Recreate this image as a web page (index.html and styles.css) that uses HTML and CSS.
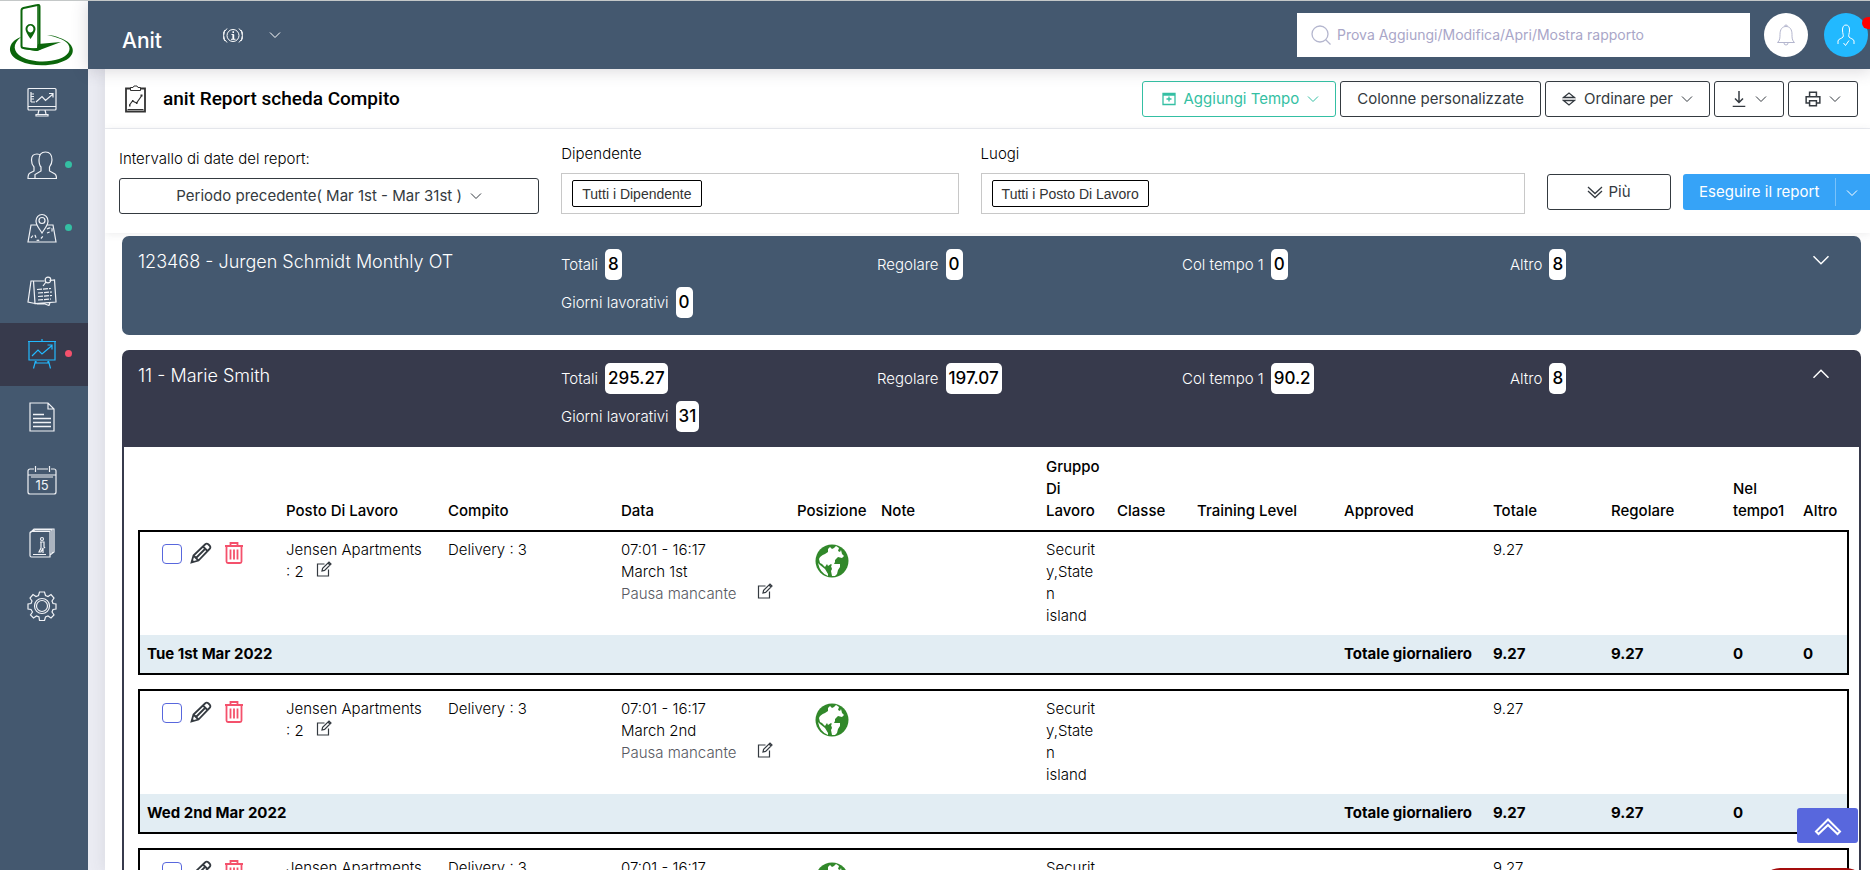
FILE: index.html
```
<!DOCTYPE html>
<html lang="it">

<head>
    <meta charset="UTF-8">
    <title>anit Report scheda Compito</title>

    <link rel="stylesheet" href="styles.css">
</head>

<body>
    <!-- shared icons -->
    <svg class="sprite" aria-hidden="true">
        <symbol id="down" viewBox="0 0 12 8">
            <path d="M1 1.500l5 5 5-5" />
        </symbol>
        <symbol id="up" viewBox="0 0 12 8">
            <path d="M1 6.500l5-5 5 5" />
        </symbol>
        <symbol id="pencil" viewBox="0 0 22 22">
            <path d="M1.500 20.500l2-7L15 2.500a2.500 2.500 0 0 1 3.500 0l1 1a2.500 2.500 0 0 1 0 3.500L8.500 18.500zM3.500 13.500l5 5M13 4.500l4.500 4.500M6 16L15.500 6.500M2 18.500l1.500 1.500" />
        </symbol>
        <symbol id="trash" viewBox="0 0 18 22">
            <path d="M0 4h18M5.500 4V1h7v3M1.500 4v15.500a1.500 1.500 0 0 0 1.500 1.500h12a1.500 1.500 0 0 0 1.500-1.500V4M5.500 7.500v10M9 7.500v10M12.500 7.500v10" />
        </symbol>
        <symbol id="note" viewBox="0 0 16 16">
            <path d="M8.500 3H1.500v12h11V8.500M6 10l.6-2.600L13 1l2 2-6.400 6.400zM12 2l2 2" />
        </symbol>
        <symbol id="globe" viewBox="0 0 34 34">
            <circle cx="17" cy="17" r="16.500" fill="#31882a" />
            <path fill="#fff" d="M4 15q1-3 6-5l3-2 0-3 2-2 2 2 2-1 2-2 3 2-1 3 2 1 1-2 1 4 2 2-2 2-4-1-3 3 0 2-2 4-2-2-3 2-1-2-2 3-3-3-2-1z" />
            <path fill="#fff" d="M16 22l2-2h7l0 3-2 3-1 4-2 2h-3l-1-5 1-2z" />
            <path fill="#fff" d="M3 19l2 2 5 4 3 5 0 2q-8-3-10-13z" />
        </symbol>
    </svg>

    <aside id="sidebar">
        <a href="#" class="logo" title="Anit">
            <svg viewBox="0 0 88 68">
                <path class="fill" d="M21 36C7 41 6 54 20 60c15 7 39 5 49-3 8-7 3-16-9-20-4-2-9-3-13-3 9 2 17 4 21 9 4 6 0 12-9 15-12 4-28 3-37-2-9-5-10-13-1-20z" />
                <path stroke-width="2" d="M21.500 9.500q0-2 2-2.500l14-3q2-.5 2 1.500V48l-3 1-13-2q-2 0-2-2z" />
                <path stroke-width="1.500" d="M38 5v43" />
                <path class="fill" d="M38 43l23-2-24 9-14-2 14-1z" />
                <path class="fill" fill-rule="evenodd" d="M30.500 38q-5-7-5-10a5 5 0 0 1 10 0q0 3-5 10zM30.500 31.500a3 3.500 0 1 0-.1 0z" />
            </svg>
        </a>
        <nav>
            <a href="#" title="Dashboard">
                <svg viewBox="0 0 30 30">
                    <path d="M2 1.500h26a1 1 0 0 1 1 1V22a1 1 0 0 1-1 1H2a1 1 0 0 1-1-1V2.500a1 1 0 0 1 1-1zM1 19.500h28M12 23l-1 4M18 23l1 4M9 27.500h12v1.500H9zM4 5v10M4 7h3M4 9.500h3M4 12h3M4 15h4M9 15l6-5.500 3.500 4L26 7M22 6.500h4v4" />
                </svg>
            </a>
            <a href="#" title="Dipendenti">
                <svg viewBox="0 0 30 30">
                    <path d="M8 28.500v-4l6-3.500v-4c-2-2-2-4-2-7 0-5 2-8 6.500-8s6.500 3 6.500 8c0 3-1 5-2.500 7v4l5.500 3c1.500 1 1.500 2.500 1.500 4.500zM8 28.500H1c0-3 0-4.500 2-5.500l4-2v-4c-2-2-2.500-4-2.500-7 0-4 2-6 5.500-6q2.500 0 3.500 1.500" />
                </svg>
                <span class="dot green"></span>
            </a>
            <a href="#" title="Luoghi">
                <svg viewBox="0 0 30 30">
                    <path d="M15 20c-3-5-6-7.500-6-12a6 6.500 0 0 1 12 0c0 4.500-3 7-6 12zM9.500 12H4L1 29h28l-3-17h-5.500" />
                    <circle cx="15" cy="7.500" r="3" />
                    <path stroke-dasharray="3 2" d="M4 25q4-6 5 0t8-3M20 16q6-3 5 2l-5 2" />
                </svg>
                <span class="dot green"></span>
            </a>
            <a href="#" title="Note">
                <svg viewBox="0 0 30 30">
                    <path d="M6.500 5h11M22.500 4.500l5-.5 1.500 22-21 1.500L6.500 5M6.500 5H4L1 26l7 1.500M10 28l8 0 4 1.500 1-3" />
                    <circle cx="21" cy="4" r="2.800" />
                    <path d="M19 6l-3 4" />
                    <path stroke-dasharray="5 1" d="M10 13.500l14-1M11 17l14-1M11 20.500l14-1M11 24l13-1" />
                </svg>
            </a>
            <a href="#" class="active" title="Report">
                <svg viewBox="0 0 30 30">
                    <path d="M1 2.500h28M2 2.500h26V21H2zM15 0v2M9 22v2h12v-2M8.500 22L6.500 29.500M21.500 22l2 7.500M5 17l6-6 4 4L25 6.500M20.500 6H25v4.500" />
                </svg>
                <span class="dot pink"></span>
            </a>
            <a href="#" title="Documenti">
                <svg viewBox="0 0 30 30">
                    <path d="M3 1h18l6 6v22H3zM21 1v6h6" />
                    <path stroke-width="1.500" d="M6 12.500h11M6 16.500h18M6 20.500h18M6 24.500h18" />
                </svg>
            </a>
            <a href="#" title="Calendario">
                <svg viewBox="0 0 30 30">
                    <path d="M7 4H3a2 2 0 0 0-2 2v4h28V6a2 2 0 0 0-2-2h-3M10 4h11M1 10v17a2 2 0 0 0 2 2h24a2 2 0 0 0 2-2V10M8.500 1v6M22.500 1v6M4 12h22" />
                    <text x="15" y="25">15</text>
                </svg>
            </a>
            <a href="#" title="Guida">
                <svg viewBox="0 0 30 30">
                    <path d="M3 5l4-4h20v23l-4 3M3 5a1.500 1.500 0 0 1 1.500-1.500H23V29H4.500A1.500 1.500 0 0 1 3 27.500zM5 3.500L8 2h17v23M6 26.500h13" />
                    <circle cx="15" cy="11" r="1.500" />
                    <path d="M13 14h4v5l1 1M14 14v6l-2 4h2l2-4v5" />
                </svg>
            </a>
            <a href="#" title="Impostazioni">
                <svg viewBox="0 0 30 30">
                    <path d="M12.500 1h5l1 3.500 2.500 1L24 3.500 27 7l-2 3 1 2.500 3 .5v5l-3 .5-1 2.500 2 3-3 3-3-2-2.500 1-1 3.500h-5l-.5-3.500-2.500-1-3 2-3-3 2-3L4 18.500 1 18v-5l3-.5L5 10 3 7l3-3.500 3 2 2.500-1z" />
                    <circle cx="15" cy="15" r="7.500" />
                    <circle cx="15" cy="15" r="5.500" />
                </svg>
            </a>
        </nav>
    </aside>

    <div id="page">
        <header id="topbar">
            <span class="brand">Anit</span>
            <button class="lang" type="button" aria-label="Informazioni">
                <svg class="info" viewBox="0 0 20 15">
                    <circle cx="10" cy="7.500" r="6" />
                    <path d="M4 .5a9 9 0 0 0 0 14M2 2a9 9 0 0 0 0 11M16 .5a9 9 0 0 1 0 14M18 2a9 9 0 0 1 0 11M8.500 6.500h2V11M8 11.300h4.500" />
                    <path stroke-width="1.800" d="M9.500 4.200h1.500M10.300 6.500V11" />
                </svg>
                <svg class="caret"><use href="#down" /></svg>
            </button>
            <label class="search">
                <svg viewBox="0 0 20 20">
                    <circle cx="9" cy="9" r="8" />
                    <path d="M14.500 14.500L19.500 19.500" />
                </svg>
                <input type="search" aria-label="Cerca" placeholder="Prova Aggiungi/Modifica/Apri/Mostra rapporto">
            </label>
            <button class="round" type="button" aria-label="Notifiche">
                <svg viewBox="0 0 20 22">
                    <path d="M8.500 2.500a1.500 1.500 0 0 1 3 0M1.500 18.500c2.500-2 2.500-5 2.500-8 0-5 2-8 6-8s6 3 6 8c0 3 0 6 2.500 8zM8 19a2 2 0 0 0 4 0" />
                </svg>
            </button>
            <button class="round user" type="button" aria-label="Profilo">
                <svg viewBox="0 0 20 22">
                    <path d="M2 20v-3c0-2 4-2.500 5-4s-.5-3-.5-7C6.500 3 7.500 1 10 1s3.500 2 3.500 5c0 4-1.500 5.500-.5 7s5 2 5 4v3M7.500 19l2 2.500 3.500-5" />
                </svg>
                <span class="badge"></span>
            </button>
        </header>

        <main id="content">
            <div class="titlebar">
                <svg class="clip" viewBox="0 0 22 28">
                    <path stroke-width="1.800" d="M1.500 3.500h19V26.500h-19z" />
                    <path fill="#fff" d="M6 2.500h2.500l1-1.500h3l1 1.500H16v3H6z" />
                    <path stroke-width="1.200" d="M5 20l3-4 4 2 5-7M3 24.500h16" />
                    <path stroke-width="2" d="M16 10.500h2M4.500 20.500h1.500M7.500 16h1.500M11.500 18H13" />
                </svg>
                <h1>anit Report scheda Compito</h1>
                <div class="tools">
                    <button class="btn add" type="button">
                        <svg viewBox="0 0 14 14"><path d="M1 1.500h12v11H1zM7 4.500v5M4.500 7h5M1 3h12" /></svg>
                        Aggiungi Tempo
                        <svg class="caret"><use href="#down" /></svg>
                    </button>
                    <button class="btn" type="button">Colonne personalizzate</button>
                    <button class="btn" type="button">
                        <svg viewBox="0 0 14 14"><path d="M1.500 5.500L7 1l5.500 4.500zM1.500 8.500L7 13l5.500-4.500zM1 5.500h12" /></svg>
                        Ordinare per
                        <svg class="caret"><use href="#down" /></svg>
                    </button>
                    <button class="btn small" type="button" aria-label="Scarica">
                        <svg viewBox="0 0 14 14"><path d="M7 0v10M3.500 6.500L7 10l3.500-3.500M1.500 13.500h11" /></svg>
                        <svg class="caret"><use href="#down" /></svg>
                    </button>
                    <button class="btn small" type="button" aria-label="Stampa">
                        <svg viewBox="0 0 14 14"><path d="M4 5V1h6v4M4 10.500H1V5h12v5.500h-3M4 8.500h6V13H4z" /></svg>
                        <svg class="caret"><use href="#down" /></svg>
                    </button>
                </div>
            </div>

            <div class="filters">
                <div class="field">
                    <label for="range">Intervallo di date del report:</label>
                    <button id="range" class="btn" type="button">
                        Periodo precedente( Mar 1st - Mar 31st )
                        <svg class="caret"><use href="#down" /></svg>
                    </button>
                </div>
                <div class="field">
                    <label for="employee">Dipendente</label>
                    <div class="picker"><button id="employee" type="button">Tutti i Dipendente</button></div>
                </div>
                <div class="field">
                    <label for="place">Luogi</label>
                    <div class="picker"><button id="place" type="button">Tutti i Posto Di Lavoro</button></div>
                </div>
                <div class="actions">
                    <button class="btn more" type="button">
                        <svg viewBox="0 0 16 14"><path d="M1 2l7 6.500L15 2M1 6l7 6.500L15 6" /></svg>
                        Più
                    </button>
                    <div class="run">
                        <button type="button">Eseguire il report</button>
                        <button class="split" type="button" aria-label="Altre opzioni"><svg class="caret"><use href="#down" /></svg></button>
                    </div>
                </div>
            </div>

            <section class="card">
                <div class="card-head">
                    <h2>123468 - Jurgen Schmidt Monthly OT</h2>
                    <div class="stat">Totali <b>8</b></div>
                    <div class="stat">Regolare <b>0</b></div>
                    <div class="stat">Col tempo 1 <b>0</b></div>
                    <div class="stat">Altro <b>8</b></div>
                    <button class="toggle" type="button" aria-label="Apri"><svg><use href="#down" /></svg></button>
                    <div class="stat days">Giorni lavorativi <b>0</b></div>
                </div>
            </section>

            <section class="card open">
                <div class="card-head">
                    <h2>11 - Marie Smith</h2>
                    <div class="stat">Totali <b>295.27</b></div>
                    <div class="stat">Regolare <b>197.07</b></div>
                    <div class="stat">Col tempo 1 <b>90.2</b></div>
                    <div class="stat">Altro <b>8</b></div>
                    <button class="toggle" type="button" aria-label="Chiudi"><svg><use href="#up" /></svg></button>
                    <div class="stat days">Giorni lavorativi <b>31</b></div>
                </div>
                <div class="card-body">
                    <table>
                        <colgroup>
                            <col class="c-act"><col class="c-post"><col class="c-task"><col class="c-date"><col class="c-pos">
                            <col class="c-note"><col class="c-group"><col class="c-class"><col class="c-level"><col class="c-appr">
                            <col class="c-tot"><col class="c-reg"><col class="c-ot"><col class="c-other">
                        </colgroup>
                        <thead>
                            <tr>
                                <th></th>
                                <th>Posto Di Lavoro</th>
                                <th>Compito</th>
                                <th>Data</th>
                                <th>Posizione</th>
                                <th>Note</th>
                                <th>Gruppo<br>Di<br>Lavoro</th>
                                <th>Classe</th>
                                <th>Training Level</th>
                                <th>Approved</th>
                                <th>Totale</th>
                                <th>Regolare</th>
                                <th>Nel<br>tempo1</th>
                                <th>Altro</th>
                            </tr>
                        </thead>
                        <tbody class="day">
                            <tr>
                                <td>
                                    <div class="row-tools">
                                        <input type="checkbox" aria-label="Seleziona 1 marzo">
                                        <button type="button" aria-label="Modifica"><svg class="pencil"><use href="#pencil" /></svg></button>
                                        <button type="button" aria-label="Elimina"><svg class="trash"><use href="#trash" /></svg></button>
                                    </div>
                                </td>
                                <td>Jensen Apartments<br>: 2 <svg class="note"><use href="#note" /></svg></td>
                                <td>Delivery : 3</td>
                                <td>07:01 - 16:17<br>March 1st<br><span class="missing">Pausa mancante</span> <svg class="note"><use href="#note" /></svg></td>
                                <td class="pos"><svg class="globe"><use href="#globe" /></svg></td>
                                <td></td>
                                <td>Securit<br>y,State<br>n<br>island</td>
                                <td></td>
                                <td></td>
                                <td></td>
                                <td>9.27</td>
                                <td></td>
                                <td></td>
                                <td></td>
                            </tr>
                            <tr class="total">
                                <td colspan="9">Tue 1st Mar 2022</td>
                                <td>Totale giornaliero</td>
                                <td>9.27</td>
                                <td>9.27</td>
                                <td>0</td>
                                <td>0</td>
                            </tr>
                        </tbody>
                        <tbody class="gap"><tr><td colspan="14"></td></tr></tbody>
                        <tbody class="day">
                            <tr>
                                <td>
                                    <div class="row-tools">
                                        <input type="checkbox" aria-label="Seleziona 2 marzo">
                                        <button type="button" aria-label="Modifica"><svg class="pencil"><use href="#pencil" /></svg></button>
                                        <button type="button" aria-label="Elimina"><svg class="trash"><use href="#trash" /></svg></button>
                                    </div>
                                </td>
                                <td>Jensen Apartments<br>: 2 <svg class="note"><use href="#note" /></svg></td>
                                <td>Delivery : 3</td>
                                <td>07:01 - 16:17<br>March 2nd<br><span class="missing">Pausa mancante</span> <svg class="note"><use href="#note" /></svg></td>
                                <td class="pos"><svg class="globe"><use href="#globe" /></svg></td>
                                <td></td>
                                <td>Securit<br>y,State<br>n<br>island</td>
                                <td></td>
                                <td></td>
                                <td></td>
                                <td>9.27</td>
                                <td></td>
                                <td></td>
                                <td></td>
                            </tr>
                            <tr class="total">
                                <td colspan="9">Wed 2nd Mar 2022</td>
                                <td>Totale giornaliero</td>
                                <td>9.27</td>
                                <td>9.27</td>
                                <td>0</td>
                                <td></td>
                            </tr>
                        </tbody>
                        <tbody class="gap"><tr><td colspan="14"></td></tr></tbody>
                        <tbody class="day">
                            <tr>
                                <td>
                                    <div class="row-tools">
                                        <input type="checkbox" aria-label="Seleziona 3 marzo">
                                        <button type="button" aria-label="Modifica"><svg class="pencil"><use href="#pencil" /></svg></button>
                                        <button type="button" aria-label="Elimina"><svg class="trash"><use href="#trash" /></svg></button>
                                    </div>
                                </td>
                                <td>Jensen Apartments</td>
                                <td>Delivery : 3</td>
                                <td>07:01 - 16:17</td>
                                <td class="pos"><svg class="globe"><use href="#globe" /></svg></td>
                                <td></td>
                                <td>Securit</td>
                                <td></td>
                                <td></td>
                                <td></td>
                                <td>9.27</td>
                                <td></td>
                                <td></td>
                                <td></td>
                            </tr>
                        </tbody>
                    </table>
                </div>
            </section>
        </main>
    </div>

    <button id="to-top" type="button" aria-label="Torna su">
        <svg viewBox="0 0 28 20"><path d="M2 15.500L14 3.500l12 12-2.500 2.500L14 9l-9.500 9z" /></svg>
    </button>
    <button id="chat" type="button" aria-label="Assistenza"></button>
</body>

</html>
```
FILE: styles.css
```
* {
    box-sizing: border-box;
}

body,
html {
    height: 100%;
    margin: 0;
    overflow: hidden;
}

body {
    display: flex;
    border-top: 1px solid #c4c8c8;
    font-family: Inter, "Open Sans", sans-serif;
    font-size: 15px;
    font-weight: 300;
    line-height: 22px;
    color: #000;
    background: #ebecf3;
}

svg {
    fill: none;
    stroke: currentColor;
}

button {
    font: inherit;
    color: inherit;
    background: none;
    border: 0;
    padding: 0;
    cursor: pointer;
}

.sprite {
    display: none;
}

.caret {
    width: 12px;
    height: 8px;
    flex: none;
}

/* sidebar */

#sidebar {
    flex: none;
    width: 88px;
    background: #44586f;
}

.logo {
    display: block;
    height: 68px;
    color: #0b660b;
    background: #fff;
}

.logo svg {
    display: block;
    width: 88px;
    height: 68px;
}

.logo .fill {
    fill: currentColor;
    stroke: none;
}

nav {
    padding-top: 2px;
}

nav a {
    position: relative;
    display: flex;
    align-items: center;
    height: 63px;
    padding: 0 0 2px 27px;
    color: #f0f2f6;
}

nav svg {
    width: 30px;
    height: 30px;
    stroke-width: 1.2;
}

nav text {
    font-size: 13px;
    font-weight: 400;
    text-anchor: middle;
    fill: currentColor;
    stroke: none;
}

nav .active {
    color: #22b9ff;
    background: #373a4c;
}

.dot {
    width: 7px;
    height: 7px;
    margin-left: 8px;
    border-radius: 50%;
}

.green {
    background: #34bfa3;
}

.pink {
    background: #f4516c;
}

/* top bar */

#page {
    flex: 1;
    min-width: 0;
    display: flex;
    flex-direction: column;
}

#topbar {
    position: relative;
    z-index: 2;
    flex: none;
    display: flex;
    align-items: center;
    height: 68px;
    padding: 0 2px 0 34px;
    color: #fff;
    background: #44586f;
    box-shadow: 0 1px 15px 1px rgba(69, 65, 78, 0.2);
}

.brand {
    padding-top: 12px;
    font-size: 21px;
    font-weight: 500;
    line-height: 28px;
}

.lang {
    display: flex;
    align-items: center;
    gap: 26px;
    margin-left: 61px;
}

.info {
    width: 20px;
    height: 15px;
}

.search {
    display: flex;
    align-items: center;
    gap: 6px;
    width: 453px;
    height: 44px;
    margin-left: auto;
    padding: 0 14px;
    color: #b4b6ce;
    background: #fff;
}

.search svg {
    flex: none;
    width: 20px;
    height: 20px;
    stroke-width: 1.3;
}

.search input {
    flex: 1;
    min-width: 0;
    padding: 0;
    border: 0;
    outline: 0;
    font: inherit;
    font-size: 14px;
    font-weight: 400;
    background: none;
}

.search input::placeholder {
    color: #a9a6c8;
}

.round {
    position: relative;
    display: flex;
    align-items: center;
    justify-content: center;
    width: 44px;
    height: 44px;
    margin-left: 14px;
    border-radius: 50%;
    color: #b4b6ce;
    background: #fff;
}

.round svg {
    width: 20px;
    height: 22px;
}

.round.user {
    margin-left: 16px;
    color: #fff;
    background: #22b9ff;
}

.badge {
    position: absolute;
    top: 4px;
    right: -10px;
    width: 16px;
    height: 12px;
    border-radius: 6px;
    background: #f00;
}

/* title and filters */

#content {
    flex: 1;
    min-height: 0;
    margin-left: 17px;
    overflow: hidden;
    background: #fff;
    box-shadow: 0 0 15px 1px rgba(69, 65, 78, 0.1);
}

.titlebar {
    display: flex;
    align-items: center;
    height: 60px;
    padding: 0 12px 0 19px;
    border-bottom: 1px solid #ebedf2;
}

.clip {
    width: 23px;
    height: 28px;
    color: #333;
}

h1 {
    flex: 1;
    margin: 0 0 0 16px;
    font-family: Roboto, sans-serif;
    font-size: 19px;
    font-weight: 500;
}

.tools {
    display: flex;
    gap: 4px;
}

.btn {
    display: flex;
    align-items: center;
    justify-content: center;
    gap: 8px;
    height: 36px;
    padding: 0 16px;
    border: 1px solid #343a40;
    border-radius: 3px;
    color: #343a40;
    font-weight: 400;
    background: #fff;
    white-space: nowrap;
}

.btn svg:not(.caret) {
    width: 14px;
    height: 14px;
    stroke-width: 1.3;
}

.btn.add {
    padding: 0 16px 0 19px;
    border-color: #34bfa3;
    color: #34bfa3;
}

.btn.small {
    width: 70px;
}

.btn.small svg:not(.caret),
.btn.more svg {
    width: 16px;
    height: 16px;
}

.filters {
    display: grid;
    grid-template-columns: 420fr 397fr 544fr 323px;
    gap: 22px;
    align-items: end;
    padding: 14px 0 19px 14px;
    box-shadow: 0 1px 8px rgba(69, 65, 78, 0.1);
}

.field {
    display: flex;
    flex-direction: column;
    gap: 8px;
}

.field .btn {
    width: 100%;
}

.picker {
    height: 41px;
    padding: 6px 10px;
    border: 1px solid #c8c8c8;
}

.picker button {
    height: 27px;
    padding: 0 9px;
    border: 1px solid #000;
    border-radius: 2px;
    color: #333;
    font-family: "Liberation Sans", Arial, sans-serif;
    font-size: 14px;
    font-weight: 400;
}

.actions {
    display: flex;
    gap: 12px;
    padding-bottom: 4px;
}

.more {
    width: 124px;
    gap: 5px;
}

.run {
    flex: 1;
    display: flex;
    align-items: center;
    height: 36px;
    padding-left: 16px;
    border-radius: 3px 0 0 3px;
    color: #fff;
    font-weight: 400;
    background: #36a3f7;
    white-space: nowrap;
}

.split {
    height: 28px;
    margin-left: auto;
    padding: 0 12px 0 10px;
    border-left: 1px solid #79c2fa;
}

/* employee cards */

.card {
    margin: 3px 9px 0 17px;
}

.card + .card {
    margin-top: 15px;
}

.card-head {
    display: grid;
    grid-template-columns: 423fr 316fr 305fr 328fr 302fr 18px;
    row-gap: 7px;
    padding: 13px 31px 17px 16px;
    border-radius: 7px;
    color: #fff;
    background: #44586f;
}

.open .card-head {
    padding-bottom: 15px;
    border-radius: 7px 7px 0 0;
    background: #373a4c;
}

h2 {
    margin: 0;
    font-size: 18px;
    font-weight: 300;
    line-height: 26px;
}

.stat {
    display: flex;
    align-items: center;
    gap: 7px;
    white-space: nowrap;
}

.stat b {
    padding: 0 3px;
    border-radius: 5px;
    color: #000;
    font-size: 17px;
    font-weight: 500;
    line-height: 31px;
    background: #fff;
}

.days {
    grid-column: 2;
}

.toggle {
    align-self: start;
    padding-top: 5px;
}

.toggle svg {
    display: block;
    width: 18px;
    height: 12px;
}

.card-body {
    padding: 0 15px 0 14px;
    border: solid #373a4c;
    border-width: 0 2px;
}

table {
    width: 100%;
    table-layout: fixed;
    border-collapse: collapse;
}

.c-act { width: 140px; }
.c-post { width: 162px; }
.c-task { width: 173px; }
.c-date { width: 176px; }
.c-pos { width: 84px; }
.c-note { width: 165px; }
.c-group { width: 71px; }
.c-class { width: 80px; }
.c-level { width: 147px; }
.c-appr { width: 149px; }
.c-tot { width: 118px; }
.c-reg { width: 122px; }
.c-ot { width: 70px; }
.c-other { width: 52px; }

th,
td {
    padding: 7px 8px 8px 7px;
    text-align: left;
    vertical-align: top;
    white-space: nowrap;
}

th {
    padding-top: 9px;
    font-weight: 500;
    vertical-align: bottom;
}

.day {
    border: 2px solid #000;
}

.total td {
    height: 38px;
    padding-top: 8px;
    font-weight: 700;
    background: #e2edf3;
}

.gap td {
    height: 16px;
    padding: 0;
}

.row-tools {
    display: flex;
    align-items: center;
    padding: 3px 0 0 15px;
}

.row-tools input {
    appearance: none;
    width: 20px;
    height: 20px;
    margin: 2px 8px 0 0;
    border: 1px solid #5867dd;
    border-radius: 4px;
}

.row-tools svg {
    display: block;
    height: 22px;
    stroke-width: 1.8;
}

.pencil {
    width: 22px;
    margin-right: 13px;
    color: #343a40;
}

.trash {
    width: 18px;
    color: #f4516c;
}

.note {
    width: 16px;
    height: 16px;
    margin-left: 8px;
    color: #343a40;
    stroke-width: 1.2;
}

.missing {
    margin-right: 8px;
    color: #575962;
}

.pos {
    text-align: center;
}

.globe {
    width: 34px;
    height: 34px;
    margin-top: 5px;
    stroke: none;
}

/* floating buttons */

#to-top {
    position: fixed;
    right: 12px;
    bottom: 27px;
    display: flex;
    align-items: center;
    justify-content: center;
    width: 61px;
    height: 35px;
    border-radius: 3px;
    color: #fff;
    background: #5867dd;
}

#to-top svg {
    width: 28px;
    height: 20px;
    stroke-width: 2;
}

#chat {
    position: fixed;
    right: 4px;
    bottom: -38px;
    width: 106px;
    height: 40px;
    border-radius: 20px;
    background: #a30d0d;
}
```
